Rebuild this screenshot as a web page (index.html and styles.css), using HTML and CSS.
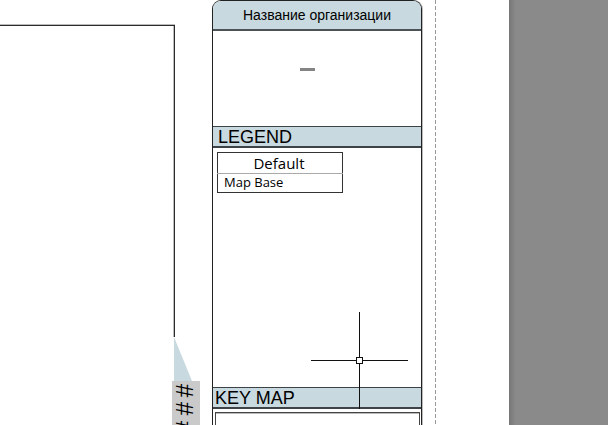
FILE: index.html
```html
<!DOCTYPE html>
<html lang="ru">
<head>
<meta charset="utf-8">
<title>Layout sheet</title>
<link rel="stylesheet" href="styles.css">
</head>
<body>
<main class="sheet">
  <section class="drawing">
    <div class="frame"></div>
    <div class="callout">
      <svg class="pointer" viewBox="0 0 18 44" aria-hidden="true"><path d="M0 0L18 44H0Z"/></svg>
      <div class="field"><span>#</span><span>#</span><span>#</span></div>
    </div>
  </section>
  <section class="block">
    <h1 class="org">Название организации</h1>
    <div class="logo"><span class="dash"></span></div>
    <h2 class="bar">LEGEND</h2>
    <div class="legend">
      <table class="key">
        <thead><tr><th>Default</th></tr></thead>
        <tbody><tr><td>Map Base</td></tr></tbody>
      </table>
    </div>
    <h2 class="bar keybar">KEY MAP</h2>
    <div class="keymap"><div class="viewport"></div></div>
  </section>
  <svg class="margin" aria-hidden="true"><path d="M13.5 0V2000"/></svg>
  <div class="desk"></div>
</main>
<svg class="cursor" viewBox="0 0 97 97" aria-hidden="true"><path d="M48.500 0V45M48.500 52V97M0 48.500H45M52 48.500H97"/><rect x="45.500" y="45.500" width="6" height="6"/></svg>
</body>
</html>
```
FILE: styles.css
```css
* { box-sizing: border-box; }
body {
  margin: 0;
  background: #fff;
  color: #000;
  font-family: "Liberation Sans", sans-serif;
}
.sheet {
  display: grid;
  grid-template-columns: 212fr 210fr 87fr 99fr;
  height: 100vh;
  overflow: hidden;
}
.drawing {
  display: flex;
  flex-direction: column;
  padding: 25px 12px 0 0;
}
.frame {
  height: 312px;
  margin-right: 25px;
  border: solid #2b2b2b;
  border-width: 1px 1px 0 0;
  box-shadow: inset -1px 0 #bbb, 0 -1px #bbb;
}
.callout {
  align-self: flex-end;
  width: 28px;
}
.pointer {
  display: block;
  width: 18px;
  height: 44px;
  margin-left: 2px;
  fill: #c8d9df;
}
.field {
  display: flex;
  flex-direction: column;
  gap: 5px;
  width: 28px;
  padding-top: 3px;
  background: #cacaca;
  font-size: 24px;
  line-height: 24px;
}
.field span {
  writing-mode: vertical-rl;
  align-self: flex-start;
}
.block {
  display: flex;
  flex-direction: column;
  border: solid #222;
  border-width: 1px 1px 0;
  border-radius: 9px 9px 0 0;
  overflow: hidden;
  box-shadow: 1px 0 #bbb;
}
.org {
  margin: 0;
  height: 30px;
  border-bottom: 2px solid #4b5356;
  background: #c8d9df;
  font-size: 14px;
  font-weight: 400;
  line-height: 28px;
  text-align: center;
}
.logo {
  display: flex;
  justify-content: center;
  height: 95px;
  padding: 37px 20px 0 0;
}
.dash {
  width: 15px;
  height: 3px;
  background: #848484;
}
.bar {
  margin: 0;
  height: 22px;
  padding-left: 5px;
  border: solid #3c4245;
  border-width: 1px 0 2px;
  background: #c8d9df;
  font-size: 18px;
  font-weight: 400;
  line-height: 20px;
}
.keybar { padding-left: 2px; }
.legend {
  height: 239px;
  padding: 4px;
}
.key {
  width: 126px;
  border: 1px solid #333;
  border-collapse: collapse;
  font-family: "Open Sans", sans-serif;
}
.key th {
  height: 21px;
  padding: 0 2px 1px 0;
  border-bottom: 1px solid #aaa;
  font-size: 15px;
  font-weight: 400;
  line-height: 18px;
}
.key td {
  height: 19px;
  padding: 0 0 2px 6px;
  font-size: 13px;
  line-height: 16px;
}
.keymap {
  flex: 1;
  padding: 3px 1px 0 2px;
}
.viewport {
  height: 100%;
  border: solid #444;
  border-width: 1px 1px 0;
  box-shadow: inset 0 1px #bbb;
}
.margin {
  width: 100%;
  height: 100%;
  stroke: #999;
  stroke-dasharray: 4 2;
  fill: none;
}
.desk {
  background: linear-gradient(to right, #777, #8a8a8a 7px);
}
.cursor {
  position: absolute;
  left: 311px;
  top: 312px;
  width: 97px;
  height: 97px;
  fill: none;
  stroke: #111;
}
```
